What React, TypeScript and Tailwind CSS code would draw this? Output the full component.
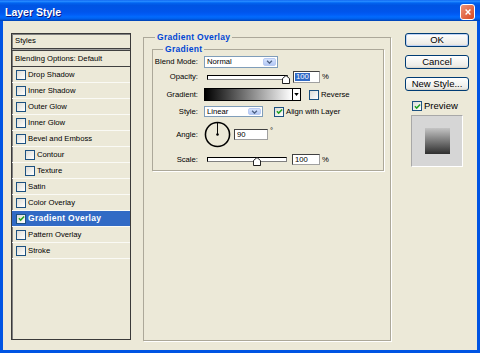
import React from 'react';

type Item = { name: string; indent?: boolean; checked?: boolean; active?: boolean };

const items: Item[] = [
  { name: 'Drop Shadow' },
  { name: 'Inner Shadow' },
  { name: 'Outer Glow' },
  { name: 'Inner Glow' },
  { name: 'Bevel and Emboss' },
  { name: 'Contour', indent: true },
  { name: 'Texture', indent: true },
  { name: 'Satin' },
  { name: 'Color Overlay' },
  { name: 'Gradient Overlay', checked: true, active: true },
  { name: 'Pattern Overlay' },
  { name: 'Stroke' },
];

const CheckBox = ({ checked }: { checked?: boolean }) => (
  <span className="flex h-[10px] w-[10px] shrink-0 items-center justify-center border border-[#1C5180] bg-[linear-gradient(135deg,#DCDCD7,#FFFFFF)]">
    {checked && (
      <svg viewBox="0 0 8 8" className="h-[7px] w-[7px]">
        <path d="M1 3.8 L3 5.8 L7 1.6" fill="none" stroke="#21A121" strokeWidth={1.7} />
      </svg>
    )}
  </span>
);

const Chevron = () => (
  <span className="flex h-full w-[13px] items-center justify-center rounded-[2px] border border-[#B9CBF3] bg-[linear-gradient(to_bottom,#D6E3FD,#B4C8F5)]">
    <svg viewBox="0 0 8 5" className="h-[4px] w-[7px]">
      <path d="M1 1 L4 4 L7 1" fill="none" stroke="#4D6185" strokeWidth={1.6} />
    </svg>
  </span>
);

const Thumb = ({ left }: { left: number }) => (
  <svg viewBox="0 0 9 10" className="absolute top-[-1px] h-[9px] w-[8px]" style={{ left }}>
    <path d="M0.5 4 L4.5 0.5 L8.5 4 L8.5 9.5 L0.5 9.5 Z" fill="#fff" stroke="#000" strokeWidth={1} />
  </svg>
);

const Label = ({ children }: { children: React.ReactNode }) => (
  <span className="w-[45px] shrink-0 text-right text-[7.7px]">{children}</span>
);

export default function App() {
  return (
    <div className="flex h-[353px] w-[480px] flex-col font-['Liberation_Sans',Arial,sans-serif] leading-none text-black">
      {/* title bar */}
      <div className="flex h-[21px] shrink-0 items-center justify-between bg-[linear-gradient(to_bottom,#0058EE_0%,#3593FF_5%,#127DFF_9%,#0262EE_15%,#0054E3_26%,#0055EB_56%,#005BF5_68%,#026AFE_80%,#0062EF_88%,#0052D6_94%,#0040AB_100%)] px-[5px]">
        <span className="pt-[4px] text-[10.5px] font-bold text-white [text-shadow:1px_1px_0_#0A1883]">Layer Style</span>
        <button className="mt-[2px] flex h-[16px] w-[15px] items-center justify-center rounded-[3px] border border-white bg-[linear-gradient(135deg,#EE9277,#D9471E)]">
          <svg viewBox="0 0 10 10" className="h-[8px] w-[8px]">
            <path d="M2 2 L8 8 M8 2 L2 8" stroke="#fff" strokeWidth={1.8} />
          </svg>
        </button>
      </div>

      <div className="flex flex-1 border-x-[3px] border-b-[3px] border-[#0054E3] bg-[#ECE9D8]">
        {/* styles list */}
        <div className="mt-[12px] ml-[8px] flex h-[307px] w-[120px] flex-col border border-[#3A3A3A] shadow-[inset_1px_1px_0_#808080]">
          <div className="flex h-[14px] items-center px-[3px] text-[7.7px]">Styles</div>
          <div className="h-[3px] border-y border-[#404040] bg-[#A0A0A0]" />
          <div className="flex h-[16px] items-center border-b border-[#404040] px-[3px] text-[7.7px]">Blending Options: Default</div>
          {items.map((it) => (
            <div
              key={it.name}
              className={`flex h-[16px] items-center gap-[2px] border-b border-[#FAFAF5] ${it.indent ? 'pl-[13px]' : 'pl-[4px]'} ${it.active ? 'bg-[#316AC5] text-white' : ''}`}
            >
              <CheckBox checked={it.checked} />
              <span className={it.active ? 'text-[8.5px] font-bold tracking-[0.3px]' : 'text-[7.7px]'}>{it.name}</span>
            </div>
          ))}
        </div>

        {/* gradient overlay group */}
        <fieldset className="mt-[11px] ml-[12px] h-[309px] w-[248px] border border-[#ACA899] pt-[2px] pr-[6px] pl-[8px] shadow-[1px_1px_0_#fff]">
          <legend className="ml-[3px] px-[2px] text-[8.5px] leading-[10px] font-bold tracking-[0.3px] text-[#0046D5]">Gradient Overlay</legend>
          <fieldset className="h-[127px] w-[232px] border border-[#ACA899] shadow-[1px_1px_0_#fff]">
            <legend className="ml-[10px] px-[2px] text-[8.5px] leading-[10px] font-bold tracking-[0.3px] text-[#0046D5]">Gradient</legend>

            <div className="mt-[2px] flex h-[12px] items-center gap-[6px]">
              <Label>Blend Mode:</Label>
              <div className="flex h-[12px] w-[74px] items-center justify-between border border-[#7F9DB9] bg-white p-[1px] pl-[2px]">
                <span className="text-[7.7px]">Normal</span>
                <Chevron />
              </div>
            </div>

            <div className="mt-[3px] flex h-[12px] items-center">
              <Label>Opacity:</Label>
              <div className="relative ml-[9px] h-[5px] w-[81px] border border-black border-r-[#808080] border-b-[#808080] bg-white">
                <Thumb left={74} />
              </div>
              <div className="ml-[5px] flex h-[12px] w-[27px] items-center border border-[#404040] border-r-[#A0A0A0] border-b-[#A0A0A0] bg-white pl-[1px]">
                <span className="bg-[#316AC5] px-[1px] text-[7.7px] text-white">100</span>
              </div>
              <span className="ml-[2px] text-[7.7px]">%</span>
            </div>

            <div className="mt-[5px] flex h-[13px] items-center">
              <Label>Gradient:</Label>
              <div className="ml-[6px] h-[13px] w-[89px] border border-black bg-[linear-gradient(to_right,#000,#fff)]" />
              <div className="flex h-[13px] w-[8px] items-center justify-center border border-l-0 border-black bg-white">
                <svg viewBox="0 0 6 4" className="h-[3px] w-[5px]">
                  <path d="M0 0 L6 0 L3 4 Z" fill="#000" />
                </svg>
              </div>
              <span className="ml-[8px]"><CheckBox /></span>
              <span className="ml-[2px] text-[7.7px]">Reverse</span>
            </div>

            <div className="mt-[5px] flex h-[11px] items-center">
              <Label>Style:</Label>
              <div className="ml-[6px] flex h-[11px] w-[59px] items-center justify-between border border-[#7F9DB9] bg-white p-[1px] pl-[2px]">
                <span className="text-[7.7px]">Linear</span>
                <Chevron />
              </div>
              <span className="ml-[11px]"><CheckBox checked /></span>
              <span className="ml-[2px] text-[7.7px]">Align with Layer</span>
            </div>

            <div className="mt-[4px] flex h-[27px] items-center">
              <Label>Angle:</Label>
              <svg viewBox="0 0 28 28" className="ml-[6px] h-[27px] w-[27px]">
                <circle cx={14} cy={14} r={12.5} fill="none" stroke="#000" strokeWidth={1.6} />
                <path d="M14 14 L14 2" stroke="#000" strokeWidth={1} />
                <circle cx={14} cy={14} r={1.3} fill="#000" />
              </svg>
              <div className="ml-[3px] flex h-[11px] w-[34px] items-center border border-[#404040] border-r-[#A0A0A0] border-b-[#A0A0A0] bg-white pl-[2px]">
                <span className="text-[7.7px]">90</span>
              </div>
              <span className="mb-[8px] ml-[2px] text-[7.7px]">°</span>
            </div>

            <div className="mt-[6px] flex h-[11px] items-center">
              <Label>Scale:</Label>
              <div className="relative ml-[9px] h-[5px] w-[80px] border border-black border-r-[#808080] border-b-[#808080] bg-white">
                <Thumb left={45} />
              </div>
              <div className="ml-[5px] flex h-[11px] w-[28px] items-center border border-[#404040] border-r-[#A0A0A0] border-b-[#A0A0A0] bg-white pl-[2px]">
                <span className="text-[7.7px]">100</span>
              </div>
              <span className="ml-[2px] text-[7.7px]">%</span>
            </div>
          </fieldset>
        </fieldset>

        {/* buttons */}
        <div className="mt-[12px] ml-[14px] flex w-[64px] flex-col">
          <button className="flex h-[14px] items-center justify-center rounded-[3px] border border-[#003C74] bg-[linear-gradient(to_bottom,#FFFFFF,#ECEBE6_85%,#D6D0C5)] text-[9.5px] shadow-[inset_0_0_0_1px_#C0D3F5]">OK</button>
          <button className="mt-[8px] flex h-[14px] items-center justify-center rounded-[3px] border border-[#003C74] bg-[linear-gradient(to_bottom,#FFFFFF,#ECEBE6_85%,#D6D0C5)] text-[9.5px]">Cancel</button>
          <button className="mt-[8px] flex h-[14px] items-center justify-center rounded-[3px] border border-[#003C74] bg-[linear-gradient(to_bottom,#FFFFFF,#ECEBE6_85%,#D6D0C5)] text-[9.5px]">New Style...</button>
          <div className="mt-[10px] ml-[7px] flex items-center gap-[2px]">
            <CheckBox checked />
            <span className="text-[9.5px]">Preview</span>
          </div>
          <div className="mt-[4px] ml-[6px] flex h-[52px] w-[52px] items-center justify-center border border-t-[#A8A8A8] border-l-[#A8A8A8] border-r-white border-b-white bg-[#D6D6D6]">
            <div className="h-[26px] w-[25px] bg-[linear-gradient(to_bottom,#C4C4C4,#2E2E2E)]" />
          </div>
        </div>
      </div>
    </div>
  );
}
